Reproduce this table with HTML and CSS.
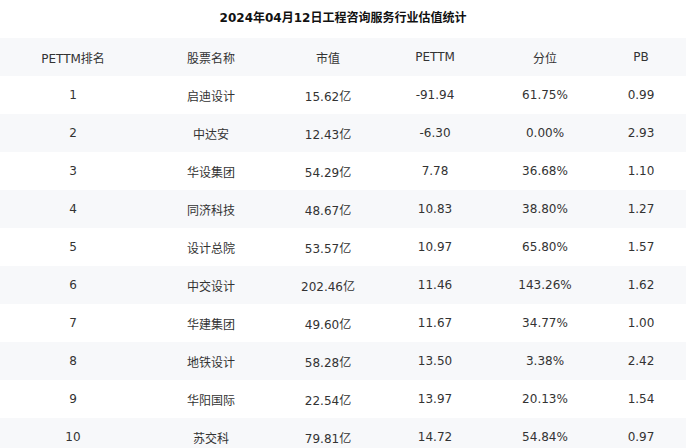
FILE: index.html
```html
<!DOCTYPE html>
<html lang="zh">
<head>
<meta charset="utf-8">
<link rel="stylesheet" href="styles.css">
</head>
<body>
<div class="page">
  <h1 class="title">2024年04月12日工程咨询服务行业估值统计</h1>
  <table class="grid">
    <colgroup>
      <col class="c1"><col class="c2"><col class="c3"><col class="c4"><col class="c5"><col class="c6">
    </colgroup>
    <thead>
      <tr><th>PETTM排名</th><th>股票名称</th><th>市值</th><th>PETTM</th><th>分位</th><th>PB</th></tr>
    </thead>
    <tbody>
      <tr><td>1</td><td>启迪设计</td><td>15.62亿</td><td>-91.94</td><td>61.75%</td><td>0.99</td></tr>
      <tr><td>2</td><td>中达安</td><td>12.43亿</td><td>-6.30</td><td>0.00%</td><td>2.93</td></tr>
      <tr><td>3</td><td>华设集团</td><td>54.29亿</td><td>7.78</td><td>36.68%</td><td>1.10</td></tr>
      <tr><td>4</td><td>同济科技</td><td>48.67亿</td><td>10.83</td><td>38.80%</td><td>1.27</td></tr>
      <tr><td>5</td><td>设计总院</td><td>53.57亿</td><td>10.97</td><td>65.80%</td><td>1.57</td></tr>
      <tr><td>6</td><td>中交设计</td><td>202.46亿</td><td>11.46</td><td>143.26%</td><td>1.62</td></tr>
      <tr><td>7</td><td>华建集团</td><td>49.60亿</td><td>11.67</td><td>34.77%</td><td>1.00</td></tr>
      <tr><td>8</td><td>地铁设计</td><td>58.28亿</td><td>13.50</td><td>3.38%</td><td>2.42</td></tr>
      <tr><td>9</td><td>华阳国际</td><td>22.54亿</td><td>13.97</td><td>20.13%</td><td>1.54</td></tr>
      <tr><td>10</td><td>苏交科</td><td>79.81亿</td><td>14.72</td><td>54.84%</td><td>0.97</td></tr>
    </tbody>
  </table>
</div>
</body>
</html>
```
FILE: styles.css
```css
html, body {
  margin: 0;
  padding: 0;
  background: #ffffff;
}
body {
  font-family: "DejaVu Sans", "Noto Sans CJK SC", sans-serif;
  font-size: 12px;
  color: #333333;
}
.page {
  width: 686px;
}
.title {
  margin: 0;
  height: 38px;
  line-height: 36px;
  font-size: 12px;
  font-weight: bold;
  text-align: center;
  color: #111111;
}
.grid {
  width: 686px;
  border-collapse: collapse;
  table-layout: fixed;
}
.c1 { width: 146px; }
.c2 { width: 130px; }
.c3 { width: 104px; }
.c4 { width: 110px; }
.c5 { width: 110px; }
.c6 { width: 86px; }
.grid th, .grid td {
  height: 38px;
  padding: 0;
  text-align: center;
  font-weight: normal;
  white-space: nowrap;
}
.grid th:last-child, .grid td:last-child {
  padding-right: 4px;
}
.grid thead tr {
  background: #f7f8fa;
}
.grid tbody tr:nth-child(even) {
  background: #f7f8fa;
}
```
